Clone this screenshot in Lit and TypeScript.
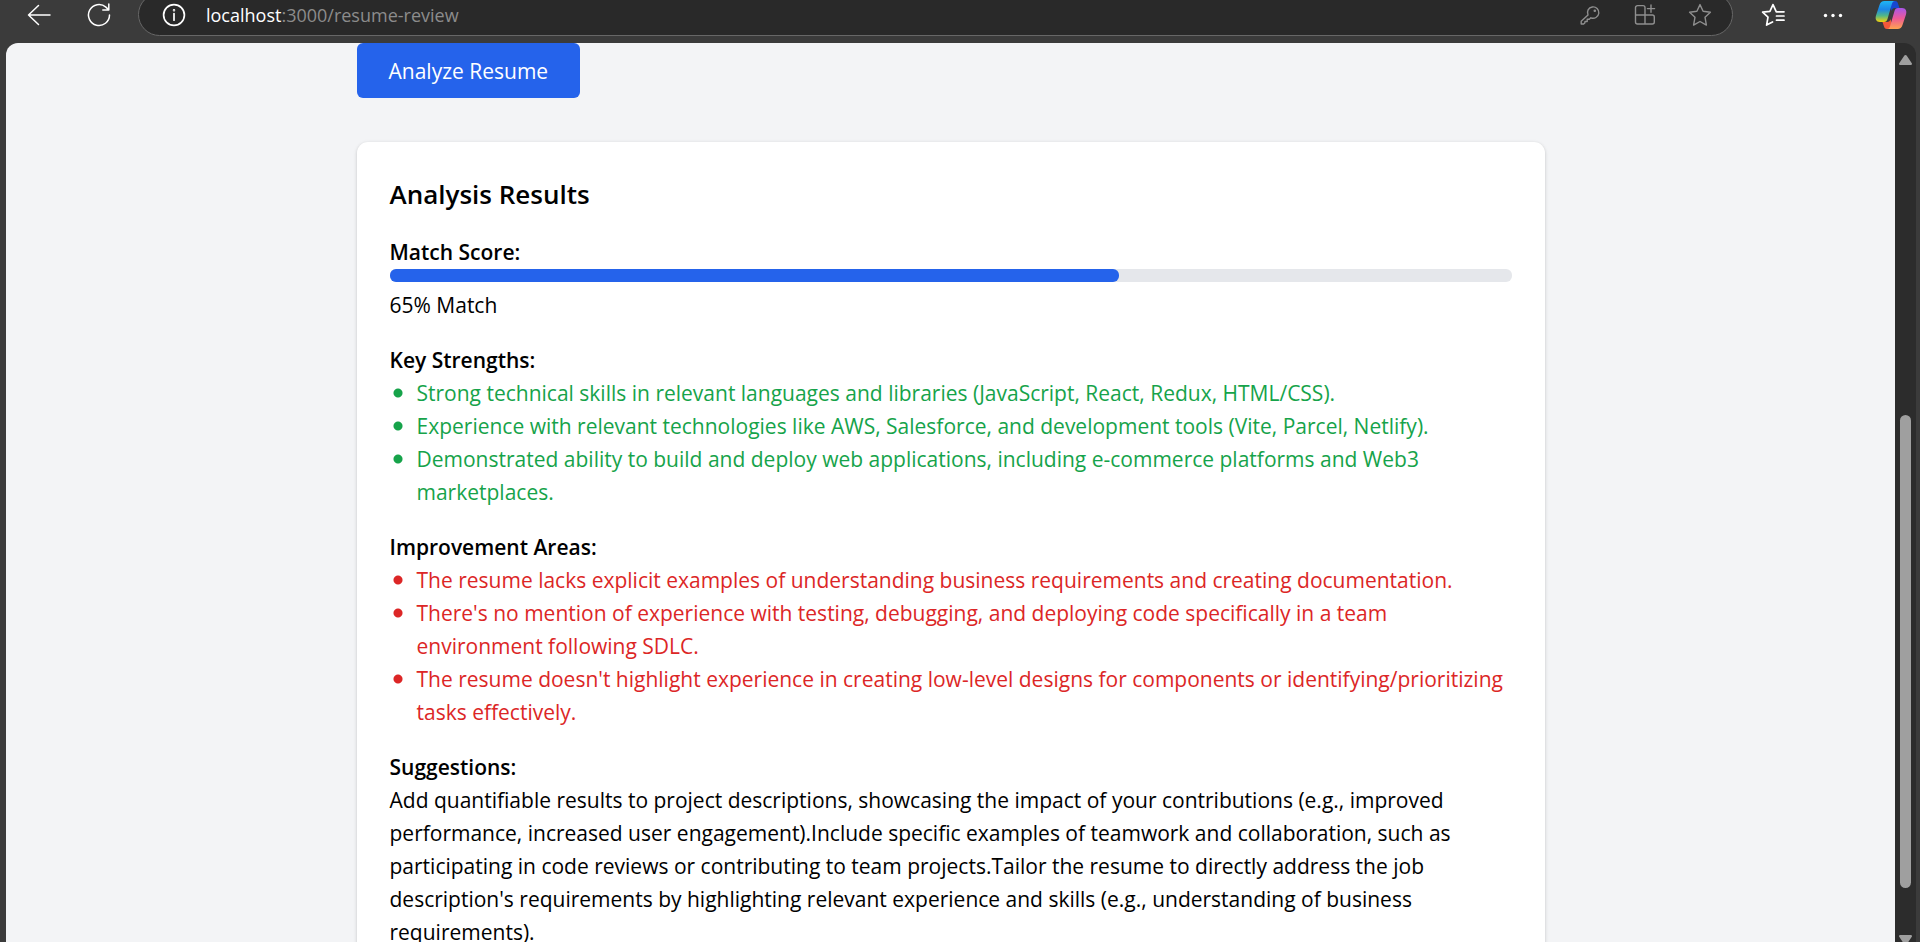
import { LitElement, html, css, svg } from "lit";
import { customElement } from "lit/decorators.js";

const strengths = [
  "Strong technical skills in relevant languages and libraries (JavaScript, React, Redux, HTML/CSS).",
  "Experience with relevant technologies like AWS, Salesforce, and development tools (Vite, Parcel, Netlify).",
  "Demonstrated ability to build and deploy web applications, including e-commerce platforms and Web3 marketplaces.",
];

const improvements = [
  "The resume lacks explicit examples of understanding business requirements and creating documentation.",
  "There's no mention of experience with testing, debugging, and deploying code specifically in a team environment following SDLC.",
  "The resume doesn't highlight experience in creating low-level designs for components or identifying/prioritizing tasks effectively.",
];

const suggestions =
  "Add quantifiable results to project descriptions, showcasing the impact of your contributions (e.g., improved performance, increased user engagement).Include specific examples of teamwork and collaboration, such as participating in code reviews or contributing to team projects.Tailor the resume to directly address the job description's requirements by highlighting relevant experience and skills (e.g., understanding of business requirements).";

const starPath =
  "M12 1.600l3.100 6.700 7.300.9-5.400 5 1.400 7.900L12 18.500l-6.400 3.600L7 14.200l-5.400-5 7.300-.9z";

@customElement("browser-toolbar")
class BrowserToolbar extends LitElement {
  static styles = css`
    :host {
      display: flex;
      align-items: center;
      padding: 0 13px 7px 27px;
      background: #3b3b3b;
      color: #fff;
    }
    button {
      display: flex;
      align-items: center;
      justify-content: center;
      flex: none;
      width: 24px;
      height: 24px;
      padding: 0;
      border: 0;
      background: none;
      color: inherit;
    }
    svg {
      display: block;
      fill: none;
      stroke: currentColor;
      stroke-linecap: round;
      stroke-linejoin: round;
      overflow: visible;
    }
    .nav {
      display: flex;
      gap: 36px;
      margin-right: 27px;
    }
    .address {
      display: flex;
      align-items: center;
      flex: 1;
      height: 43px;
      padding: 0 20px 0 23px;
      box-sizing: border-box;
      border: 1px solid #676767;
      border-radius: 22px;
      background: #292929;
    }
    .url {
      flex: 1;
      margin-left: 20px;
      font-size: 18px;
      line-height: 24px;
      color: #8c8c8c;
      text-decoration: none;
    }
    .host {
      color: #fff;
    }
    .tools {
      display: flex;
      gap: 31px;
      color: #8f8f8f;
    }
    .menu {
      display: flex;
      align-items: center;
      gap: 36px;
      margin-left: 28px;
    }
    .copilot {
      width: 32px;
      height: 30px;
      margin-left: -6px;
    }
  `;

  render() {
    return html`
      <nav class="nav">
        <button aria-label="Back">
          <svg width="24" height="24" viewBox="0 0 24 24" stroke-width="1.500">
            <path d="M23 12H1.500M11.500 2.500L1.500 12l10 9.500" />
          </svg>
        </button>
        <button aria-label="Refresh">
          <svg width="24" height="24" viewBox="0 0 24 24" stroke-width="1.500">
            <path d="M22.500 12a10.500 10.500 0 1 1-3.600-7.900l2.600 2.500M21.800 1v6h-6" />
          </svg>
        </button>
      </nav>
      <div class="address">
        <button aria-label="Site information">
          <svg width="24" height="24" viewBox="0 0 24 24" stroke-width="1.700">
            <circle cx="12" cy="12" r="10.400" />
            <path d="M12 10.600v6.600" />
            <circle cx="12" cy="7.200" r=".4" />
          </svg>
        </button>
        <a class="url" href="#"><span class="host">localhost</span>:3000/resume-review</a>
        <div class="tools">
          <button aria-label="Passwords">
            <svg width="24" height="24" viewBox="0 0 24 24" stroke-width="1.400">
              <path d="M10 12a5.700 5.700 0 1 1 2.900 2.800L11.300 16.300H9.200v2.200H7l-.2 1.400L5.600 21H3.200v-2.800z" />
              <circle cx="16.800" cy="7.800" r=".6" fill="currentColor" />
            </svg>
          </button>
          <button aria-label="Apps">
            <svg width="24" height="24" viewBox="0 0 24 24" stroke-width="1.400">
              <path d="M12 12V4.600a2 2 0 0 0-2-2H4.500a2 2 0 0 0-2 2V19a2 2 0 0 0 2 2h14.800a2 2 0 0 0 2-2v-5a2 2 0 0 0-2-2H2.500M12 12v9M18 2v7.200M14.400 5.600h7.200" />
            </svg>
          </button>
          <button aria-label="Add to favorites">
            <svg width="24" height="24" viewBox="0 0 24 24" stroke-width="1.400">
              <path d=${starPath} />
            </svg>
          </button>
        </div>
      </div>
      <div class="menu">
        <button aria-label="Favorites">
          <svg width="24" height="24" viewBox="0 0 24 24" stroke-width="1.700">
            <path d="M15.200 8.600L12 1.600 8.900 8.300l-7.300.9 5.400 5-1.400 7.900L11.500 19M15.500 8.800H23M15.500 13H23M15.500 17.200H23" />
          </svg>
        </button>
        <button aria-label="More">
          <svg width="24" height="24" viewBox="0 0 24 24">
            <g fill="#fff" stroke="none">
              <circle cx="4.500" cy="12.500" r="1.700" />
              <circle cx="12" cy="12.500" r="1.700" />
              <circle cx="19.500" cy="12.500" r="1.700" />
            </g>
          </svg>
        </button>
        <button class="copilot" aria-label="Copilot">
          <svg width="32" height="30" viewBox="0 0 32 30">
            <defs>
              <linearGradient id="a" x1="0" y1="0" x2="0" y2="1">
                <stop offset="0" stop-color="#1fb6f5" />
                <stop offset=".4" stop-color="#1b86e8" />
                <stop offset=".7" stop-color="#52b788" />
                <stop offset="1" stop-color="#f5d30a" />
              </linearGradient>
              <linearGradient id="b" x1="0" y1="0" x2="0" y2="1">
                <stop offset="0" stop-color="#a855e8" />
                <stop offset=".5" stop-color="#ee5a96" />
                <stop offset="1" stop-color="#ffa44f" />
              </linearGradient>
            </defs>
            <g stroke="none">
              <path fill="#1647d1" d="M14 1h6c2 0 2.500 1 3 2.500L24.500 8H20c-2 0-3 1-3.500 3z" />
              <path fill="#f4583a" d="M18 29h-6c-2 0-2.500-1-3-2.500L7.500 22H12c2 0 3-1 3.500-3z" />
              <path fill="url(#a)" d="M9.500 1H20c-2 0-2.700 1.500-3.200 3.200L12.500 19c-.6 2-1.500 3-3.500 3H5c-4 0-5-3-4-6.500L4.500 5C5.300 2.500 6.800 1 9.500 1z" />
              <path fill="url(#b)" d="M22.500 29H12c2 0 2.700-1.500 3.200-3.200L19.500 11c.6-2 1.500-3 3.500-3h4c4 0 5 3 4 6.500L27.500 25c-.8 2.500-2.300 4-5 4z" />
            </g>
          </svg>
        </button>
      </div>
    `;
  }
}

@customElement("page-scrollbar")
class PageScrollbar extends LitElement {
  static styles = css`
    :host {
      display: flex;
      flex-direction: column;
      align-items: center;
      flex: none;
      width: 21px;
      padding-top: 12px;
      box-sizing: border-box;
      border-radius: 0 12px 0 0;
      background: #2c2c2c;
    }
    svg {
      display: block;
      flex: none;
      fill: #9f9f9f;
    }
    .track {
      display: flex;
      flex-direction: column;
      flex: 1;
    }
    .before {
      flex: 350;
    }
    .thumb {
      flex: 473;
      width: 11px;
      border-radius: 6px;
      background: #9f9f9f;
    }
    .after {
      flex: 47;
    }
    .down {
      margin-bottom: -3px;
    }
  `;

  render() {
    const arrow = svg`<path d="M5.200.8a1.500 1.500 0 0 1 2.600 0l5 7.400c.6 1 0 1.800-1 1.800H1.200c-1 0-1.600-.8-1-1.800z" />`;
    return html`
      <svg width="13" height="10" viewBox="0 0 13 10">${arrow}</svg>
      <div class="track">
        <div class="before"></div>
        <div class="thumb"></div>
        <div class="after"></div>
      </div>
      <svg class="down" width="13" height="10" viewBox="0 0 13 10">
        <g transform="rotate(180 6.500 5)">${arrow}</g>
      </svg>
    `;
  }
}

@customElement("analysis-results")
class AnalysisResults extends LitElement {
  static properties = { score: { type: Number } };
  declare score: number;

  static styles = css`
    :host {
      display: block;
      padding: 33px;
      border-radius: 11px;
      background: #fff;
      box-shadow: 0 1px 4px rgba(0, 0, 0, 0.1), 0 1px 3px rgba(0, 0, 0, 0.1);
    }
    h2,
    h3,
    p,
    ul {
      margin: 0;
    }
    h2 {
      margin-bottom: 22px;
      font-size: 26px;
      font-weight: 600;
      line-height: 39px;
    }
    h3 {
      font-size: inherit;
      font-weight: 600;
    }
    section + section {
      margin-top: 22px;
    }
    .bar {
      height: 13px;
      border-radius: 6px;
      background: #e5e7eb;
    }
    .fill {
      height: 100%;
      border-radius: 6px;
      background: #2563eb;
    }
    .percent {
      margin-top: 7px;
    }
    ul {
      padding: 0;
      list-style: none;
    }
    li {
      padding-left: 27px;
      background: radial-gradient(circle at 8px 16px, currentColor 4px, transparent 5px);
    }
    .good {
      color: #16a34a;
    }
    .bad {
      color: #dc2626;
    }
  `;

  render() {
    return html`
      <h2>Analysis Results</h2>
      <section>
        <h3 id="score">Match Score:</h3>
        <div class="bar" role="progressbar" aria-labelledby="score" aria-valuenow=${this.score}>
          <div class="fill" style="width:${this.score}%"></div>
        </div>
        <p class="percent">${this.score}% Match</p>
      </section>
      <section>
        <h3>Key Strengths:</h3>
        <ul class="good">
          ${strengths.map((item) => html`<li>${item}</li>`)}
        </ul>
      </section>
      <section>
        <h3>Improvement Areas:</h3>
        <ul class="bad">
          ${improvements.map((item) => html`<li>${item}</li>`)}
        </ul>
      </section>
      <section>
        <h3>Suggestions:</h3>
        <p>${suggestions}</p>
      </section>
    `;
  }
}

@customElement("app-root")
class AppRoot extends LitElement {
  static styles = css`
    :host {
      display: flex;
      flex-direction: column;
      height: 100vh;
      overflow: hidden;
      background: #3b3b3b;
      font-family: "Open Sans", "Noto Sans", sans-serif;
    }
    browser-toolbar {
      flex: none;
      margin-top: -7px;
    }
    .window {
      display: flex;
      flex: 1;
      min-height: 0;
      padding: 0 4px 0 6px;
    }
    .page {
      flex: 1;
      overflow: hidden;
      border-radius: 12px 0 0 0;
      background: #f3f4f6;
      color: #000;
      font-size: 21px;
      line-height: 33px;
    }
    .content {
      max-width: 1188px;
      margin: 0 auto;
    }
    .analyze {
      display: block;
      margin-bottom: 44px;
      padding: 12px 32px 10px;
      border: 0;
      border-radius: 6px;
      background: #2563eb;
      color: #fff;
      font: inherit;
    }
  `;

  render() {
    return html`
      <browser-toolbar></browser-toolbar>
      <div class="window">
        <main class="page">
          <div class="content">
            <button class="analyze">Analyze Resume</button>
            <analysis-results .score=${65}></analysis-results>
          </div>
        </main>
        <page-scrollbar></page-scrollbar>
      </div>
    `;
  }
}
